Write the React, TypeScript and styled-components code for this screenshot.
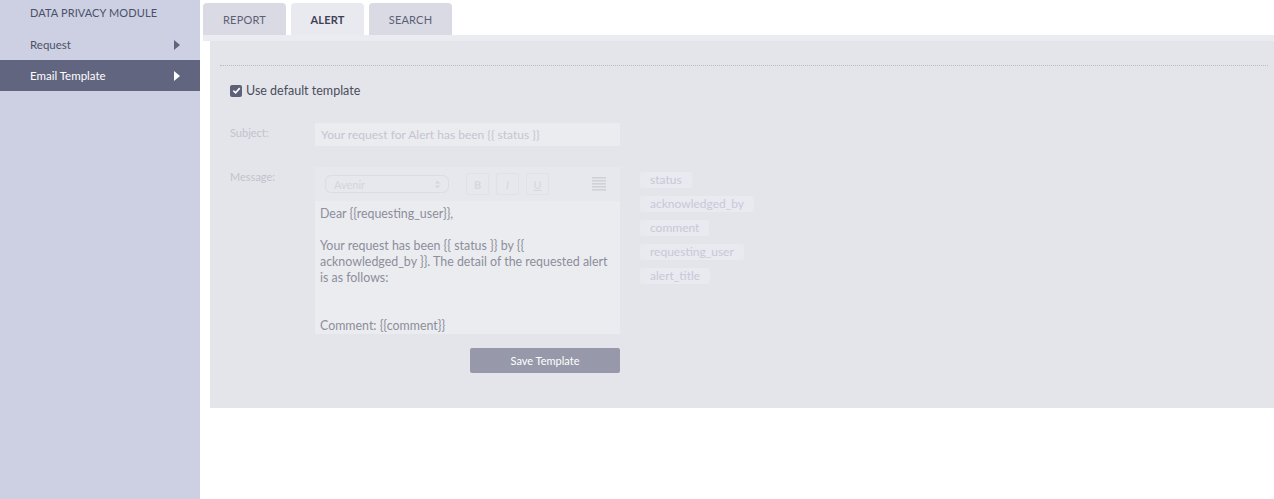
import React from "react";
import styled, { createGlobalStyle } from "styled-components";

const Global = createGlobalStyle`
  html, body { margin: 0; padding: 0; background: #fff; }
  body { font-family: Lato, "Open Sans", sans-serif; }
  * { box-sizing: border-box; }
`;

const Page = styled.div`
  display: flex;
  width: 1274px;
  height: 499px;
  overflow: hidden;
`;

const Sidebar = styled.nav`
  width: 200px;
  flex-shrink: 0;
  background: #cdd0e3;
  display: flex;
  flex-direction: column;
`;

const SideTitle = styled.div`
  height: 29px;
  padding: 6px 0 0 30px;
  font-size: 11px;
  color: #4c5068;
  letter-spacing: 0.1px;
`;

const SideItem = styled.div<{ $active?: boolean }>`
  height: 31px;
  display: flex;
  align-items: center;
  justify-content: space-between;
  padding: 0 20px 0 30px;
  font-size: 11.5px;
  background: ${(p) => (p.$active ? "#61657f" : "transparent")};
  color: ${(p) => (p.$active ? "#ffffff" : "#4c5068")};
`;

const Arrow = styled.span<{ $active?: boolean }>`
  width: 0;
  height: 0;
  border-top: 5px solid transparent;
  border-bottom: 5px solid transparent;
  border-left: 6px solid ${(p) => (p.$active ? "#ffffff" : "#5f637d")};
`;

const Main = styled.div`
  flex: 1;
  display: flex;
  flex-direction: column;
  padding-left: 3px;
`;

const Tabs = styled.div`
  display: flex;
  gap: 5px;
  padding-top: 3px;
  height: 35px;
`;

const Tab = styled.div<{ $active?: boolean; $w: number }>`
  width: ${(p) => p.$w}px;
  height: 32px;
  border-radius: 4px 4px 0 0;
  display: flex;
  align-items: center;
  justify-content: center;
  font-size: 11px;
  letter-spacing: 0.2px;
  background: ${(p) => (p.$active ? "#e9eaef" : "#d9dae4")};
  color: ${(p) => (p.$active ? "#3f4256" : "#5d6075")};
  font-weight: ${(p) => (p.$active ? 700 : 400)};
`;

const Strip = styled.div`
  height: 6px;
  background: #ebecf1;
`;

const Panel = styled.section`
  margin-left: 7px;
  height: 367px;
  background: #e4e5ea;
  padding: 24px 6px 0 10px;
`;

const Divider = styled.div`
  border-top: 1px dotted #b9bac3;
`;

const CheckRow = styled.label`
  display: flex;
  align-items: center;
  gap: 4px;
  margin: 17px 0 0 10px;
  font-size: 12.5px;
  color: #4a4c5c;
`;

const Box = styled.span`
  width: 12px;
  height: 12px;
  border-radius: 2px;
  background: #5d6079;
  display: flex;
  align-items: center;
  justify-content: center;
`;

const FormRow = styled.div<{ $top: number }>`
  display: flex;
  margin: ${(p) => p.$top}px 0 0 10px;
`;

const Label = styled.div`
  width: 85px;
  font-size: 11px;
  color: #c1c3cd;
  padding-top: 3px;
`;

const Input = styled.div`
  width: 305px;
  height: 23px;
  background: #ebecf0;
  font-size: 12px;
  color: #c4c5cf;
  padding: 4px 6px;
`;

const Editor = styled.div`
  width: 305px;
  height: 167px;
  background: #ebecf0;
  display: flex;
  flex-direction: column;
`;

const Toolbar = styled.div`
  height: 34px;
  flex-shrink: 0;
  background: #e7e8ed;
  display: flex;
  align-items: center;
  padding: 0 10px;
`;

const FontSelect = styled.div`
  width: 124px;
  height: 18px;
  border: 1px solid #dcdde4;
  border-radius: 6px;
  font-size: 11px;
  color: #d3d4dc;
  padding: 1px 8px;
  display: flex;
  justify-content: space-between;
  align-items: center;
`;

const FmtGroup = styled.div`
  display: flex;
  gap: 7px;
  margin-left: 17px;
`;

const FmtBtn = styled.div<{ $style?: string }>`
  width: 23px;
  height: 22px;
  border: 1px solid #e1e2e8;
  border-radius: 2px;
  display: flex;
  align-items: center;
  justify-content: center;
  font-size: 11px;
  color: #d6d7de;
  font-weight: ${(p) => (p.$style === "b" ? 700 : 400)};
  font-style: ${(p) => (p.$style === "i" ? "italic" : "normal")};
  text-decoration: ${(p) => (p.$style === "u" ? "underline" : "none")};
`;

const ListBtn = styled.div`
  margin-left: auto;
  width: 22px;
  height: 22px;
  display: flex;
  align-items: center;
  justify-content: center;
`;

const Body = styled.div`
  padding: 5px 5px 0;
  font-size: 12.4px;
  line-height: 16px;
  color: #8c8e9b;
`;

const Para = styled.p<{ $gap?: number }>`
  margin: ${(p) => p.$gap ?? 0}px 0 0;
`;

const Tags = styled.div`
  display: flex;
  flex-direction: column;
  align-items: flex-start;
  gap: 8px;
  margin-left: 20px;
  padding-top: 5px;
`;

const TagChip = styled.span`
  height: 16px;
  padding: 0 10px;
  background: #e9eaef;
  border-radius: 3px;
  font-size: 12px;
  line-height: 16px;
  color: #c7c8da;
`;

const Actions = styled.div`
  display: flex;
  margin: 14px 0 0 250px;
`;

const SaveButton = styled.button`
  width: 150px;
  height: 25px;
  border: none;
  border-radius: 2px;
  background: #9799aa;
  color: #ffffff;
  font-family: inherit;
  font-size: 11px;
`;

const SUBJECT = "Your request for Alert has been {{ status }}";
const GREETING = "Dear {{requesting_user}},";
const MESSAGE =
  "Your request has been {{ status }} by {{ acknowledged_by }}. The detail of the requested alert is as follows:";
const COMMENT = "Comment: {{comment}}";

export default function App() {
  return (
    <Page>
      <Global />
      <Sidebar>
        <SideTitle>DATA PRIVACY MODULE</SideTitle>
        <SideItem>
          Request <Arrow />
        </SideItem>
        <SideItem $active>
          Email Template <Arrow $active />
        </SideItem>
      </Sidebar>
      <Main>
        <Tabs>
          <Tab $w={83}>REPORT</Tab>
          <Tab $w={73} $active>ALERT</Tab>
          <Tab $w={83}>SEARCH</Tab>
        </Tabs>
        <Strip />
        <Panel>
          <Divider />
          <CheckRow>
            <Box>
              <svg width="9" height="9" viewBox="0 0 10 10">
                <path d="M1.5 5.2 L4 7.6 L8.6 2.4" stroke="#fff" strokeWidth="1.8" fill="none" />
              </svg>
            </Box>
            Use default template
          </CheckRow>
          <FormRow $top={25}>
            <Label>Subject:</Label>
            <Input>{SUBJECT}</Input>
          </FormRow>
          <FormRow $top={21}>
            <Label>Message:</Label>
            <Editor>
              <Toolbar>
                <FontSelect>
                  Avenir
                  <svg width="5" height="9" viewBox="0 0 5 9">
                    <path d="M0 3.5 L2.5 0.5 L5 3.5 Z M0 5.5 L2.5 8.5 L5 5.5 Z" fill="#d3d4dc" />
                  </svg>
                </FontSelect>
                <FmtGroup>
                  <FmtBtn $style="b">B</FmtBtn>
                  <FmtBtn $style="i">I</FmtBtn>
                  <FmtBtn $style="u">U</FmtBtn>
                </FmtGroup>
                <ListBtn>
                  <svg width="14" height="14" viewBox="0 0 14 14">
                    {[1, 4, 7, 10, 13].map((y) => (
                      <rect key={y} x="0" y={y - 1} width="14" height="1.6" fill="#cfd0d8" />
                    ))}
                  </svg>
                </ListBtn>
              </Toolbar>
              <Body>
                <Para>{GREETING}</Para>
                <Para $gap={16}>{MESSAGE}</Para>
                <Para $gap={32}>{COMMENT}</Para>
              </Body>
            </Editor>
            <Tags>
              <TagChip>status</TagChip>
              <TagChip>acknowledged_by</TagChip>
              <TagChip>comment</TagChip>
              <TagChip>requesting_user</TagChip>
              <TagChip>alert_title</TagChip>
            </Tags>
          </FormRow>
          <Actions>
            <SaveButton>Save Template</SaveButton>
          </Actions>
        </Panel>
      </Main>
    </Page>
  );
}
